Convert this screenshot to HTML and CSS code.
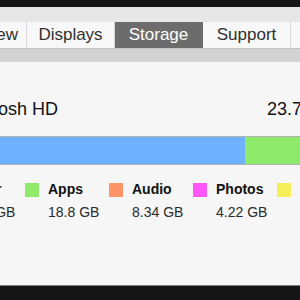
FILE: index.html
```html
<html>
  <head>
    <link rel="stylesheet" href="styles.css">
  </head>
  <body>
    <div class="window">
      <div class="toolbar">
        <div class="tabs">
          <div class="tab">Overview</div>
          <div class="tab">Displays</div>
          <div class="tab active">Storage</div>
          <div class="tab">Support</div>
          <div class="tab">Service</div>
        </div>
      </div>
      <div class="strip"></div>
      <div class="pane">
        <div class="disk-head">
          <span class="disk-name">Macintosh HD</span>
          <span class="disk-free">23.76 GB free of 120.47 GB</span>
        </div>
        <div class="bar">
          <div class="seg other" style="width: 300px"></div>
          <div class="seg apps" style="width: 140px"></div>
          <div class="seg audio" style="width: 60px"></div>
        </div>
        <div class="legend">
          <div class="item">
            <span class="swatch other"></span>
            <span class="label">Other</span>
            <span class="size">64.5 GB</span>
          </div>
          <div class="item">
            <span class="swatch apps"></span>
            <span class="label">Apps</span>
            <span class="size">18.8 GB</span>
          </div>
          <div class="item">
            <span class="swatch audio"></span>
            <span class="label">Audio</span>
            <span class="size">8.34 GB</span>
          </div>
          <div class="item">
            <span class="swatch photos"></span>
            <span class="label">Photos</span>
            <span class="size">4.22 GB</span>
          </div>
          <div class="item">
            <span class="swatch movies"></span>
            <span class="label">Movies</span>
            <span class="size">1.02 GB</span>
          </div>
        </div>
      </div>
    </div>
  </body>
</html>
```

FILE: styles.css
```css
* {
  box-sizing: border-box;
}

body {
  margin: 0;
  background: #151515;
  font-family: "Liberation Sans", Arial, sans-serif;
  overflow: hidden;
}

.window {
  margin-top: 7px;
  height: 279px;
  background: #f6f6f6;
  border-bottom: 1px solid #808080;
  overflow: hidden;
}

.toolbar {
  background: #e7e7e7;
  padding-top: 15px;
}

.tabs {
  display: flex;
  margin-left: -61px;
  height: 26px;
}

.tab {
  flex: none;
  width: 88px;
  background: #f8f8f8;
  border-right: 1px solid #d8d8d8;
  color: #303030;
  font-size: 17px;
  line-height: 26px;
  text-align: center;
}

.tab.active {
  background: #6c6c6c;
  border-right-color: #6c6c6c;
  color: #ffffff;
}

.strip {
  height: 14px;
  background: #d2d2d2;
  border-top: 1px solid #c4c4c4;
}

.pane {
  margin-left: -55px;
  width: 700px;
  padding-top: 37px;
}

.disk-head {
  display: flex;
  font-size: 18px;
  line-height: 21px;
  color: #111111;
}

.disk-name {
  width: 322px;
}

.bar {
  display: flex;
  margin-top: 16px;
  height: 29px;
  border-top: 1px solid #b2b2b2;
  border-bottom: 1px solid #b2b2b2;
}

.seg {
  height: 100%;
}

.other {
  background: #6fb0ff;
}

.apps {
  background: #8fea6c;
}

.audio {
  background: #fd9467;
}

.photos {
  background: #ff55fb;
}

.movies {
  background: #f7ee5c;
}

.legend {
  display: flex;
  margin-left: -4px;
  margin-top: 16px;
}

.item {
  flex: none;
  width: 84px;
  display: grid;
  grid-template-columns: 14px auto;
  column-gap: 9px;
  row-gap: 7px;
}

.swatch {
  width: 14px;
  height: 14px;
  margin-top: 2px;
}

.label {
  font-size: 14px;
  line-height: 16px;
  font-weight: bold;
  color: #111111;
}

.size {
  grid-column: 2;
  font-size: 14px;
  line-height: 16px;
  color: #2a2a2a;
}
```
